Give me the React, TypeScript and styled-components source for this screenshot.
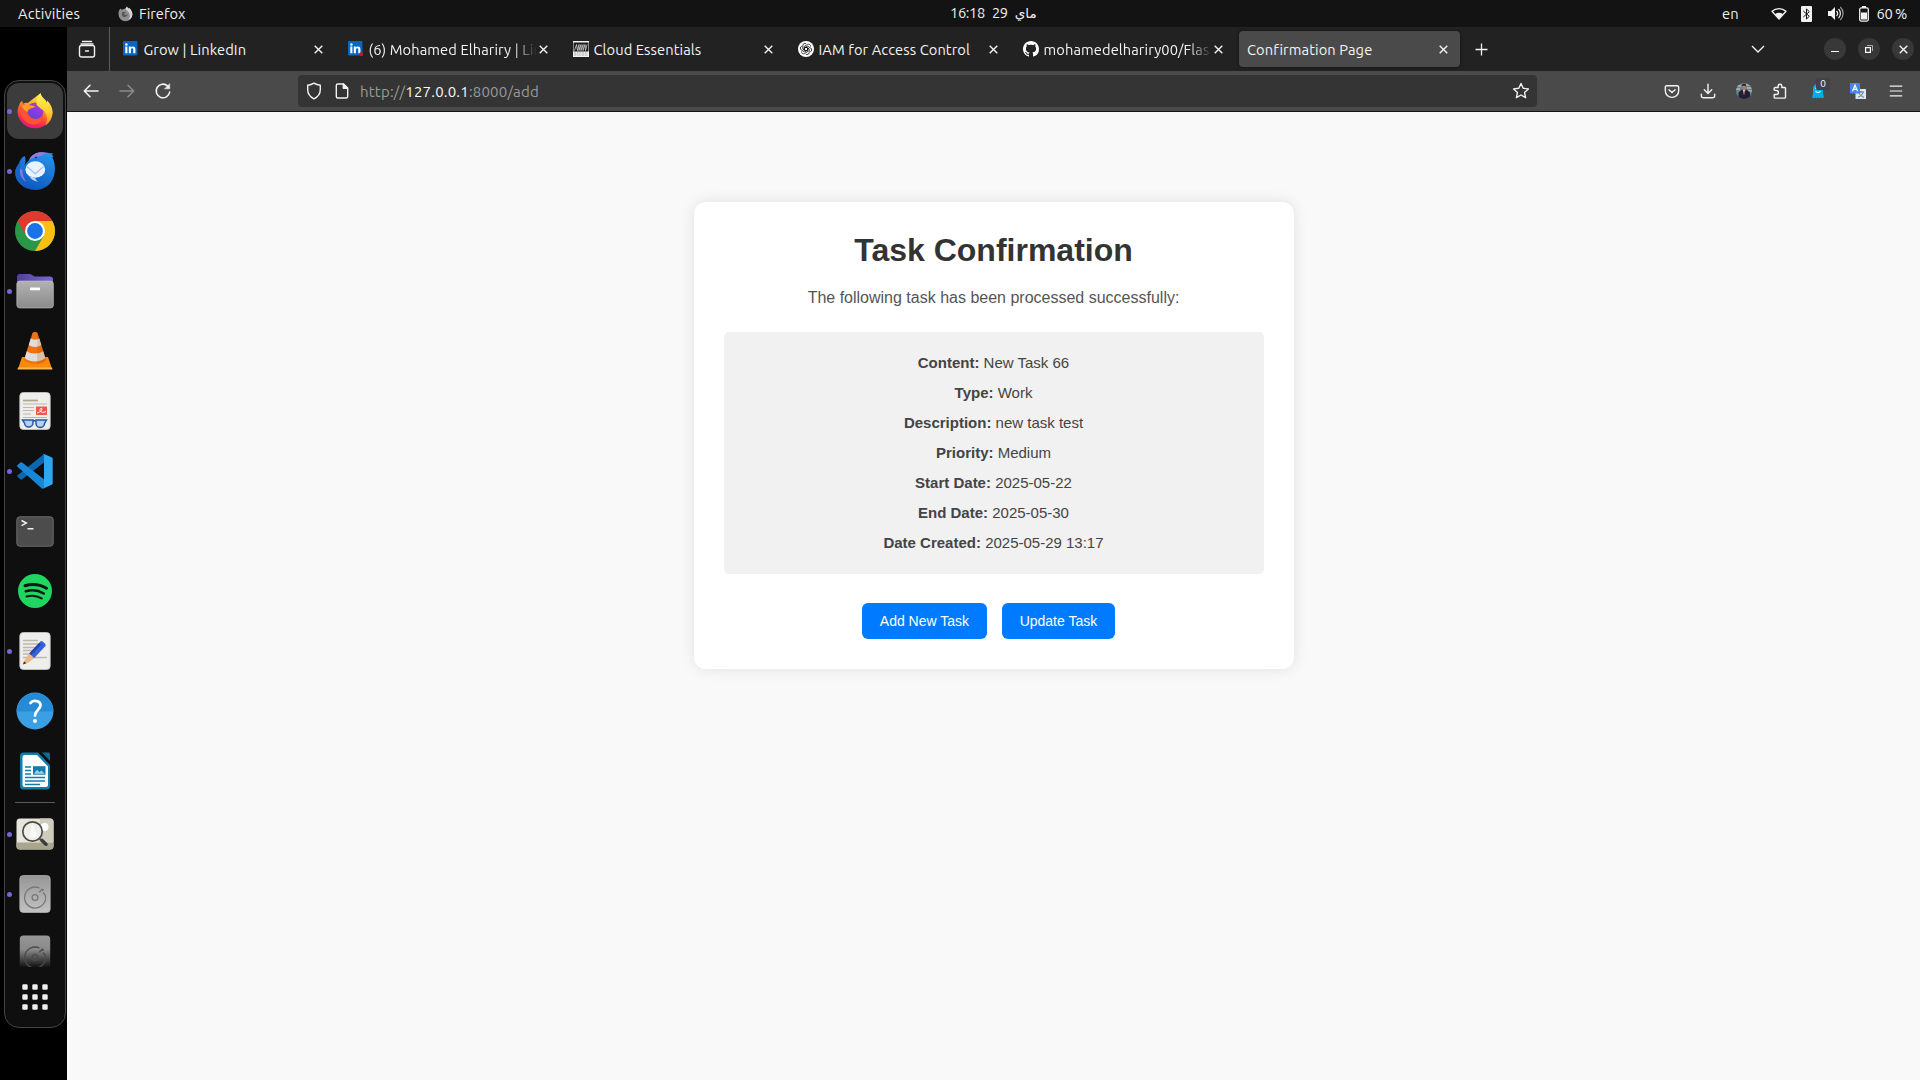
import React from "react";
import styled, { createGlobalStyle } from "styled-components";

const Global = createGlobalStyle`
  * { box-sizing: border-box; }
  html, body { margin: 0; padding: 0; background: #000; overflow: hidden; }
  svg { display: block; flex: none; }
`;

const UI_FONT = `Ubuntu, "Noto Sans", "DejaVu Sans", sans-serif`;

const Desktop = styled.div`
  width: 1920px;
  height: 1080px;
  display: grid;
  grid-template-rows: 27px 1fr;
  background: #000;
  font-family: ${UI_FONT};
  overflow: hidden;
`;

/* ---------- system bar ---------- */

const SystemBar = styled.header`
  display: grid;
  grid-template-columns: 1fr auto 1fr;
  align-items: center;
  background: #131313;
  color: #f0f0f0;
  font-size: 14.67px;
  line-height: 27px;
  white-space: nowrap;
`;

const BarGroup = styled.div<{ $end?: boolean }>`
  display: flex;
  align-items: center;
  height: 27px;
  justify-content: ${(p) => (p.$end ? "flex-end" : "flex-start")};
  padding: ${(p) => (p.$end ? "0 13px 0 0" : "0 0 0 18px")};
`;

const BarText = styled.span<{ $w?: number; $ls?: number; $ml?: number }>`
  width: ${(p) => (p.$w ? `${p.$w}px` : "auto")};
  letter-spacing: ${(p) => p.$ls ?? 0}px;
  margin-left: ${(p) => p.$ml ?? 0}px;
`;

const BarIcon = styled.span<{ $ml: number }>`
  display: flex;
  margin-left: ${(p) => p.$ml}px;
`;

const Clock = styled.div`
  display: flex;
  gap: 7px;
  width: 86px;
  letter-spacing: -0.35px;
  position: relative;
  left: 33px;
  line-height: 26px;
  height: 27px;
`;

const Arabic = styled.bdi`
  font-family: "DejaVu Sans", sans-serif;
  font-size: 13.5px;
  letter-spacing: 0;
`;

/* ---------- dock ---------- */

const Workspace = styled.div`
  display: grid;
  grid-template-columns: 67px 1fr;
  min-height: 0;
`;

const DockArea = styled.aside`
  background: #000;
  padding: 53px 1px 0 4px;
`;

const DockPanel = styled.nav`
  height: 948px;
  border: 1px solid #454545;
  border-radius: 15px;
  background: #0f0f0f;
  display: flex;
  flex-direction: column;
`;

const DockSlot = styled.div<{ $active?: boolean; $cut?: boolean }>`
  flex: none;
  margin: ${(p) => (p.$cut ? "2px 2px 0" : "2px")};
  height: ${(p) => (p.$cut ? 41 : 56)}px;
  overflow: hidden;
  display: grid;
  grid-template-columns: 5px 46px 5px;
  grid-template-rows: 56px;
  align-items: center;
  justify-items: center;
  border-radius: ${(p) => (p.$active ? 12 : 0)}px;
  background: ${(p) => (p.$active ? "#3c3c3c" : "transparent")};
`;

const Dot = styled.i<{ $on?: boolean }>`
  width: 5px;
  height: 5px;
  border-radius: 50%;
  background: ${(p) => (p.$on ? "#7764d8" : "transparent")};
`;

const DockRule = styled.hr`
  flex: none;
  width: 40px;
  height: 1px;
  border: 0;
  margin: 1px auto;
  background: #5a5a5a;
`;

/* ---------- browser ---------- */

const Browser = styled.main`
  display: grid;
  grid-template-rows: 44px 41px 1fr;
  min-width: 0;
`;

const TabStrip = styled.div`
  display: flex;
  align-items: center;
  background: #222222;
  color: #f4f4f4;
`;

const TabOverview = styled.div`
  width: 43px;
  height: 44px;
  border-right: 1px solid #5b5b5b;
  display: flex;
  align-items: center;
  padding-left: 11px;
  margin-right: 2px;
`;

const Tab = styled.div<{ $active?: boolean }>`
  width: 221px;
  height: 36px;
  margin: 0 2px;
  padding: ${(p) => (p.$active ? "0 10px 0 8px" : "0 10px 0 8.5px")};
  border-radius: 4px;
  display: flex;
  align-items: center;
  background: ${(p) => (p.$active ? "#4a4a4a" : "transparent")};
  box-shadow: ${(p) => (p.$active ? "0 0 3px rgba(0,0,0,.55)" : "none")};
`;

const Favicon = styled.span`
  width: 16px;
  margin-right: 5px;
  display: flex;
`;

const TabTitle = styled.span<{ $fade?: boolean }>`
  flex: 1;
  min-width: 0;
  overflow: hidden;
  white-space: nowrap;
  font-size: 14.67px;
  line-height: 20px;
  padding-top: 1px;
  letter-spacing: 0.1px;
  -webkit-mask-image: ${(p) =>
    p.$fade ? "linear-gradient(to right, #000 calc(100% - 24px), transparent)" : "none"};
`;

const TabClose = styled.span`
  width: 13px;
  display: flex;
  justify-content: center;
`;

const StripEnd = styled.div`
  margin-left: auto;
  display: flex;
  align-items: center;
  padding-right: 6px;
`;

const NewTab = styled.span`
  display: flex;
  margin: 1px 0 0 13px;
`;

const WindowButton = styled.span`
  width: 22px;
  height: 22px;
  margin-left: 12px;
  border-radius: 50%;
  background: #383838;
  display: flex;
  align-items: center;
  justify-content: center;
`;

const ListTabs = styled.span`
  display: flex;
  margin-right: 47px;
`;

const Toolbar = styled.div`
  display: flex;
  align-items: center;
  background: #4a4a4a;
  border-bottom: 1px solid #151515;
  padding: 0 16px 0 15px;
`;

const NavGroup = styled.div`
  display: flex;
  gap: 18px;
  width: 216px;
`;

const UrlBar = styled.div`
  width: 1239px;
  height: 32px;
  border-radius: 4px;
  background: #343434;
  display: flex;
  align-items: center;
  padding: 0 7px 0 7px;
  color: #9b9b9b;
  font-size: 15px;
`;

const Url = styled.span`
  flex: 1;
  margin-left: 9px;
  padding-top: 1px;
  letter-spacing: 0.2px;
  b { font-weight: 400; color: #fbfbfb; }
`;

const UrlIcon = styled.span<{ $ml?: number }>`
  display: flex;
  margin-left: ${(p) => p.$ml ?? 0}px;
`;

const ToolGroup = styled.div`
  margin-left: auto;
  display: flex;
  align-items: center;
  gap: 20px;
`;

const Extension = styled.span<{ $nudge?: number }>`
  position: relative;
  display: flex;
  margin: 0 ${(p) => p.$nudge ?? 0}px;
`;

const Badge = styled.span`
  position: absolute;
  left: 5px;
  top: -5px;
  width: 14px;
  height: 12px;
  border-radius: 2px;
  background: #42424e;
  color: #fff;
  font-size: 10px;
  line-height: 11px;
  text-align: center;
`;

/* ---------- web page ---------- */

const Page = styled.section`
  background: #f9f9f9;
  font-family: Arial, "Liberation Sans", sans-serif;
  padding-top: 90px;
  min-height: 0;
`;

const Card = styled.article`
  width: 600px;
  height: 467px;
  margin: 0 auto;
  padding: 30px;
  border-radius: 12px;
  background: #fff;
  box-shadow: 0 0 15px rgba(0, 0, 0, 0.1);
  text-align: center;
`;

const Title = styled.h1`
  margin: 0;
  color: #333;
  font-size: 32px;
  line-height: 37px;
`;

const Lead = styled.p`
  margin: 19px 0 0;
  color: #555;
  font-size: 16px;
  line-height: 19px;
`;

const Details = styled.div`
  margin-top: 25px;
  height: 242px;
  padding: 16px 20px;
  border-radius: 5px;
  background: #f1f1f1;
`;

const Detail = styled.p`
  margin: 0;
  color: #444;
  font-size: 15px;
  line-height: 30px;
`;

const Actions = styled.div`
  display: flex;
  justify-content: center;
  gap: 15px;
  margin-top: 29px;
  padding-right: 10px;
`;

const Action = styled.a`
  height: 36px;
  padding: 0 17.800px;
  border-radius: 6px;
  background: #007bff;
  color: #fff;
  font-size: 14px;
  line-height: 36px;
`;

/* ---------- small icons ---------- */

const Line: React.FC<{ s?: number; w?: number; c?: string; children: React.ReactNode }> = ({
  s = 18,
  w = 1.4,
  c = "#f2f2f2",
  children,
}) => (
  <svg width={s} height={s} viewBox="0 0 18 18" fill="none" stroke={c} strokeWidth={w} strokeLinecap="round" strokeLinejoin="round">
    {children}
  </svg>
);

const Cross = ({ w = 1.4 }: { w?: number }) => (
  <svg width="9" height="9" viewBox="0 0 9 9" stroke="#f2f2f2" strokeWidth={w}>
    <path d="M.7.7l7.6 7.6M8.3.7L.7 8.3" />
  </svg>
);

const LinkedIn = ({ dot }: { dot?: boolean }) => (
  <svg width="16" height="16" viewBox="0 0 16 16">
    <rect x="0" y="0" width="14.4" height="14.4" rx="1" fill="#0a66c2" />
    <circle cx="3.4" cy="3.5" r="1.25" fill="#fff" />
    <path d="M2.3 5.6h2.1v6.6H2.3zM5.8 5.6h2v.9c.4-.7 1.100-1.100 2.100-1.100 1.900 0 2.500 1.200 2.500 3v3.800h-2.100V8.700c0-.8-.2-1.500-1.100-1.500s-1.300.6-1.300 1.500v3.500H5.800z" fill="#fff" />
    {dot && <circle cx="13.2" cy="13.3" r="2" fill="#c4161c" />}
  </svg>
);

const Adidas = () => (
  <svg width="16" height="16" viewBox="0 0 16 16">
    <rect width="16" height="16" fill="#f3f3f3" />
    <rect x=".5" y="1.500" width="15" height="9" fill="#1c1c1c" />
    <path d="M1.500 9.500l2-6 1 6 1.500-6v6l2-6v6l2-6v6l2-6 .500 6 1.500-6" stroke="#cfcfcf" strokeWidth=".8" fill="none" />
    <path d="M1 12h14M1 14h14" stroke="#999" strokeWidth=".8" strokeDasharray="2 .7" />
  </svg>
);

const OpenAi = () => (
  <svg width="16" height="16" viewBox="0 0 16 16">
    <circle cx="8" cy="8" r="8" fill="#fff" />
    <g fill="none" stroke="#111" strokeWidth=".75" strokeLinejoin="round">
      {[0, 60, 120, 180, 240, 300].map((a) => (
        <path key={a} transform={`rotate(${a} 8 8)`} d="M6.300 9V5.300l3.200-1.850a2.050 2.050 0 0 1 3 2.200M6.300 7.100L8 6.100l1.700 1" />
      ))}
    </g>
  </svg>
);

const GitHub = () => (
  <svg width="16" height="16" viewBox="0 0 16 16" fill="#fff">
    <path d="M8 0C3.580 0 0 3.580 0 8c0 3.540 2.290 6.530 5.470 7.590.4.070.550-.170.550-.380 0-.190-.010-.820-.010-1.490-2.010.370-2.530-.490-2.690-.940-.090-.230-.480-.940-.820-1.130-.280-.150-.680-.520-.010-.530.630-.010 1.080.580 1.230.820.720 1.210 1.870.870 2.330.660.070-.520.280-.870.510-1.070-1.780-.2-3.640-.890-3.640-3.950 0-.870.310-1.590.820-2.150-.080-.2-.360-1.020.080-2.120 0 0 .670-.210 2.200.820.640-.180 1.320-.270 2-.270s1.360.090 2 .270c1.530-1.040 2.200-.820 2.200-.820.440 1.100.160 1.920.080 2.120.510.560.820 1.270.820 2.150 0 3.070-1.870 3.750-3.650 3.950.290.250.540.730.540 1.480 0 1.070-.010 1.930-.010 2.200 0 .210.150.460.550.380A8.010 8.010 0 0 0 16 8c0-4.420-3.580-8-8-8z" />
  </svg>
);

const Avatar = () => (
  <svg width="16" height="16" viewBox="0 0 16 16">
    <clipPath id="av"><circle cx="8" cy="8" r="8" /></clipPath>
    <g clipPath="url(#av)">
      <rect width="16" height="16" fill="#6f8289" />
      <path d="M0 3h5M10 2h6M0 6h4M11 5h5M11 8h5" stroke="#c6d2d2" strokeWidth="1.200" />
      <path d="M2.500 16V9.500L6 6.500h4.500l3.500 3V16z" fill="#1d2233" />
      <path d="M6.700 6.500L8 12l1.500-5.500z" fill="#e2e5ee" />
      <path d="M7.800 7.500h.7l.2 4-.6 1-.5-1z" fill="#91323a" />
      <ellipse cx="8.100" cy="4" rx="2" ry="2.700" fill="#ad7b64" />
      <path d="M6 3.200C6 0 10.300 0 10.200 3.200 9 2.200 7.200 2.200 6 3.200z" fill="#201917" />
    </g>
  </svg>
);

const Ghost = () => (
  <svg width="14" height="16" viewBox="0 0 14 16">
    <path d="M2 6C2 2.500 4 1 7 1s5 1.500 5 5v4.500l1 4-1.800.8-1.300-.9-1.400.9-1.500-.9-1.500.9-1.400-.9-1.300.9L1 14.500l1-4z" fill="#00aef0" />
    <path d="M4.500 8c1.200 1.900 3.800 1.900 5 0" stroke="#fff" strokeWidth="1.100" fill="none" />
    <circle cx="5" cy="5.200" r=".8" fill="#fff" />
    <circle cx="9" cy="5.200" r=".8" fill="#fff" />
  </svg>
);

const Translate = () => (
  <svg width="16" height="16" viewBox="0 0 16 16">
    <rect x="5.500" y="6" width="10.500" height="10" fill="#dfe4ec" />
    <path d="M8 9h6M11 8v1.500M13 9.500c-.6 2.200-2.500 4-5 4.700M9 10c.9 2 3 3.800 5 4.200" stroke="#587393" fill="none" strokeWidth="1" />
    <rect width="10" height="10.500" fill="#4285f4" />
    <path d="M2.500 8.300L5 2.200l2.500 6.100M3.400 6.300h3.200" stroke="#fff" strokeWidth="1.200" fill="none" />
  </svg>
);

const GreyFox = () => (
  <svg width="15" height="16" viewBox="0 0 15 16">
    <path d="M1.300 4l1.300-1.600.9 1.400L5 3.200l2.500-.6L9 .4c.4 1 1 1.400 1.400 2.300.3-.5.500-.8.500-1 2 1.500 3.500 4 3.500 6.600a6.900 6.900 0 0 1-13.900 0C.500 6.500.7 5.200 1.300 4z" fill="#8f8f8f" />
    <path d="M9 .4c.4 1 1 1.400 1.400 2.300.3-.5.500-.8.500-1 2 1.500 3.500 4 3.500 6.600 0 2.500-1.600 4.700-3.900 5.500 2-2.500 1.500-5.500.5-7.300C10 5 8 4.500 7.500 2.600z" fill="#d6d6d6" />
    <path d="M4.200 6.200c1-.6 3-.2 3.900.3-.6.900-1.500 1-2.300 1.300.9 1.500 3 1.300 4 .2-.2 2-1.600 3-3.200 3-1.900 0-3.400-2-2.400-4.800z" fill="#555" />
  </svg>
);

/* ---------- dock artwork ---------- */

const Firefox = () => (
  <svg width="38" height="38" viewBox="0 0 38 38">
    <defs>
      <linearGradient id="ff1" x1=".75" y1="0" x2=".35" y2="1">
        <stop offset="0" stopColor="#fff04a" /><stop offset=".35" stopColor="#ffb52c" />
        <stop offset=".62" stopColor="#ff5a2f" /><stop offset=".85" stopColor="#f8225f" /><stop offset="1" stopColor="#e01a7c" />
      </linearGradient>
      <linearGradient id="ff2" x1=".8" y1="0" x2=".2" y2="1">
        <stop offset="0" stopColor="#b833e1" /><stop offset="1" stopColor="#5a45d6" />
      </linearGradient>
      <linearGradient id="ff3" x1="0" y1="0" x2="0" y2="1">
        <stop offset="0" stopColor="#fff44f" /><stop offset=".6" stopColor="#ffcb33" /><stop offset="1" stopColor="#ff8a2a" />
      </linearGradient>
    </defs>
    <path d="M3.500 12.500C4 10.800 5 9.700 6.300 8.800c0 1.500.3 2.300.8 3 1.300-.9 3-1.200 4.600-.9L24.500 1.200c.6 3 2.300 4.300 4.400 6.500 1.200 1.200 1.700 2.400 2 3.200.3-.7.300-1.500.1-2.400 3.500 3.700 5.500 7.500 5.500 12A17.600 17.600 0 0 1 1.500 20.500c0-3 .7-5.700 2-8z" fill="url(#ff1)" />
    <circle cx="19" cy="19" r="8.600" fill="url(#ff2)" />
    <path d="M24.500 1.200c.6 3 2.300 4.300 4.400 6.500 1.200 1.200 1.700 2.400 2 3.200.3-.7.300-1.500.1-2.400 3.500 3.700 5.500 7.500 5.500 12 0 5.500-3 10.500-7.500 13 2.400-3.500 2.800-8.500.5-12.500-1.500-3-6-4.500-9-8.500-.5-5 1-9 4-11.300z" fill="url(#ff3)" />
    <path d="M4 15c1.500-2 3-3 5-3 .5 2 2 4 2.500 6-.5 5 4 9.500 9 9 3-.3 5.500-2 6.700-4.500.5 6-4.200 10.500-10.200 10C8.500 32 3 24 4 15z" fill="#ff5230" />
    <path d="M5.500 14c3-2 6.500-2.200 9.500-.4 1.400-.2 3 0 4.200.9-1.500 1.600-4 1.800-6 2.700-1 .8-1.500 1.800-1.700 2.800-2-.8-4.500-2.500-6-6z" fill="#ff9c24" />
  </svg>
);

const Thunderbird = () => (
  <svg width="40" height="40" viewBox="0 0 40 40">
    <defs>
      <linearGradient id="tb1" x1=".7" y1="0" x2=".3" y2="1">
        <stop offset="0" stopColor="#2592e8" /><stop offset="1" stopColor="#0f55bd" />
      </linearGradient>
    </defs>
    <path d="M14 9C17 3 23 .5 29 1.500c3.500.5 6.500.5 9.500 1l-2 1.500 2 1-1.200 1.200c2 4 3 8.500 2.500 14C39 31.500 30.500 39 20 39 9 39 0 31 .2 20.500c1-5 3-6.500 4-8.500 1-3 2-5 5.300-7 1.800 3 1 6.500-.2 9.500z" fill="url(#tb1)" />
    <path d="M14 9C17 3 23 .5 29 1.500c2 .2 4 .6 5.500.5-4 .8-7 1.200-9 3-3 .5-7 1-11.500 4z" fill="#9c7ae0" />
    <path d="M9.500 5C5.500 8 4.300 14 5 19c-3 7 0 14 7 17C4 34 0 28 .2 20.500c1-5 3-6.500 4-8.500 1-3 2-5 5.300-7z" fill="#1765c8" />
    <path d="M5.500 17c-1.500 6 1 11 6 14-2-3-4.500-7-4-12z" fill="#8d77e0" />
    <ellipse cx="20.300" cy="18.500" rx="9.900" ry="8.300" fill="#e9f3ff" />
    <path d="M12 15.500l8.300 7.200 8.300-7.200" stroke="#abc7ea" strokeWidth="1.500" fill="none" />
    <path d="M14 25c2 3.500 5 5 9 5.800-1.700-1.200-2.500-2.500-3-4z" fill="#b8d5f6" />
    <circle cx="21" cy="6.500" r="1.100" fill="#0d3e8a" />
  </svg>
);

const Chrome = () => (
  <svg width="40" height="40" viewBox="0 0 40 40">
    <circle cx="20" cy="20" r="20" fill="#2a9648" />
    <path d="M20 10h17.300A20 20 0 0 1 20 40l8.700-15z" fill="#fbbf14" />
    <path d="M2.700 10A20 20 0 0 1 37.300 10H20a10 10 0 0 0-8.700 15z" fill="#df3a2e" />
    <circle cx="20" cy="20" r="10" fill="#fff" />
    <circle cx="20" cy="20" r="7.900" fill="#1a73e8" />
  </svg>
);

const Files = () => (
  <svg width="38" height="36" viewBox="0 0 38 36">
    <defs>
      <linearGradient id="fl" x1="0" y1="0" x2="0" y2="1"><stop offset="0" stopColor="#b2b2b2" /><stop offset="1" stopColor="#8b8b8b" /></linearGradient>
      <linearGradient id="fp" x1="0" y1="0" x2="1" y2="0"><stop offset="0" stopColor="#5140a0" /><stop offset="1" stopColor="#7d67cf" /></linearGradient>
    </defs>
    <path d="M1 4a3 3 0 0 1 3-3h10c2 0 3 2.500 5 2.500h15a3 3 0 0 1 3 3V16H1z" fill="url(#fp)" />
    <rect x=".8" y="8" width="36.600" height="27" rx="3" fill="url(#fl)" stroke="#c4c4c4" strokeWidth=".6" />
    <rect x="14" y="14.500" width="10" height="2.700" rx=".6" fill="#fff" />
  </svg>
);

const Vlc = () => (
  <svg width="36" height="39" viewBox="0 1 36 39">
    <path d="M5 26h26l4 12H1z" fill="#f98b0c" />
    <path d="M1 36.500h34l.5 2H.5z" fill="#ffb84c" />
    <path d="M15.500 2c1-1.200 4-1.200 5 0L29 29c-3 5-19 5-22 0z" fill="#ef7310" />
    <path d="M13.700 7.500c2 1.500 6.500 1.500 8.600 0l2 6.600c-3 2.500-9.600 2.500-12.600 0zM9.800 20.300c4 3 12.400 3 16.400 0l2 6.700c-4 4.500-16.400 4.500-20.400 0z" fill="#dedede" />
    <path d="M20.500 2L29 29c-2 3-6 4-9 4z" fill="#a63c00" opacity=".18" />
  </svg>
);

const Sheet = ({ children }: { children: React.ReactNode }) => (
  <svg width="32" height="38" viewBox="0 0 32 38">
    <rect x=".8" y=".5" width="30.400" height="37" rx="3.500" fill="#eeeeec" stroke="#c9c9c9" strokeWidth=".8" />
    {children}
  </svg>
);

const DocViewer = () => (
  <Sheet>
    <path d="M4 8.500h15" stroke="#aca698" strokeWidth="1.800" />
    <path d="M4 12h24M4 15.500h11M4 18.500h11M4 22h8M4 25.500h24" stroke="#bdb8aa" strokeWidth="1.200" />
    <rect x="17" y="14.500" width="11" height="8.500" fill="#f4564d" />
    <path d="M18 21c2-.5 5-2 5-4 0-1.500-2.500-.5-2 1.500.7 2 3.500 2.500 6 1" stroke="#fff" strokeWidth=".9" fill="none" />
    <path d="M3.500 28h10.500v2.500a4.200 4.200 0 0 1-8.500.5zM17 28h10.500l-2 3.500a4.200 4.200 0 0 1-8.500-.500zM14 28.800h3" fill="#9fc4e9" fillOpacity=".7" stroke="#2159a5" strokeWidth="1.500" />
  </Sheet>
);

const VsCode = () => (
  <svg width="36" height="36" viewBox="0 0 36 36">
    <path d="M.5 12.300L3.300 9.800c.6-.5 1.300-.5 1.900 0L27 26.500V35L.6 13.700c-.5-.4-.5-1-.1-1.400z" fill="#1681cd" />
    <path d="M.5 23.800l2.800 2.400c.6.500 1.300.5 1.900 0L27 9.500V1L.6 22.300c-.5.500-.5 1.100-.1 1.500z" fill="#0868b2" />
    <path d="M26.500.7L35 4.600c.4.200.7.600.7 1.200v24.400c0 .6-.3 1-.7 1.200l-8.500 4c-.8.400-1.500.200-2.200-.4 1 .9 2.700.3 2.700-1.100V2.100c0-1.400-1.700-2.100-2.700-1.100.7-.6 1.400-.7 2.200-.3z" fill="#2ca7f2" />
    <path d="M5.200 9.800L27 26.500V35c-1 .9-2 .7-2.700 0L.6 13.700c-.5-.4-.5-1-.1-1.400l2.800-2.500c.6-.5 1.300-.5 1.900 0z" fill="#1787d5" />
  </svg>
);

const Terminal = () => (
  <svg width="38" height="31" viewBox="0 0 38 31">
    <rect x=".8" y=".8" width="36.400" height="29.400" rx="3" fill="#4c4c4c" stroke="#6b6b6b" />
    <path d="M5.500 4.500l4.800 2.600-4.800 2.600M11.500 12.800h6" stroke="#f0f0f0" strokeWidth="1.500" fill="none" />
  </svg>
);

const Spotify = () => (
  <svg width="34" height="34" viewBox="0 0 34 34">
    <circle cx="17" cy="17" r="17" fill="#1fd760" />
    <g fill="none" stroke="#0f1511" strokeLinecap="round">
      <path d="M7 11.700c7-2 15-1.300 21.500 2.500" strokeWidth="3" />
      <path d="M7.800 17.300c6-1.700 12.500-1 18 2.200" strokeWidth="2.500" />
      <path d="M8.500 22.500c5-1.400 10.500-.9 15.200 1.900" strokeWidth="2" />
    </g>
  </svg>
);

const TextEditor = () => (
  <Sheet>
    <path d="M4 8.500h15M4 12h17M4 15.500h16M4 18.500h12M4 22h8M4 25.500h24" stroke="#bdb8aa" strokeWidth="1.500" />
    <path d="M10.200 21.500L21.700 9.300c1.200-1.200 6 3.300 4.800 4.600L15 26.300z" fill="#3763d8" />
    <path d="M10.200 21.500L20.300 10.800l1.800 1.700L12 23.200z" fill="#2445a8" />
    <path d="M10.200 21.500l4.800 4.800-5.500 4.200-5 1.700 1.600-5z" fill="#efb985" />
    <path d="M4 32.500l1-3.300 2.300 2.100z" fill="#333" />
  </Sheet>
);

const Help = () => (
  <svg width="38" height="38" viewBox="0 0 38 38">
    <circle cx="19" cy="19" r="18.500" fill="#3b9fe3" />
    <path d="M.5 19.500a18.500 18.500 0 0 1 37 0z" fill="#268bd6" />
    <path d="M14.500 11c2-3 10-3 10 2.300 0 4.200-5.500 4.700-5.500 10.200" fill="none" stroke="#fff" strokeWidth="2.800" strokeLinecap="round" />
    <circle cx="19" cy="29" r="2" fill="#fff" />
  </svg>
);

const Writer = () => (
  <svg width="32" height="38" viewBox="0 0 32 38">
    <path d="M1 4a3.500 3.500 0 0 1 3.500-3.500H19L31 13v21a3.500 3.500 0 0 1-3.500 3.500h-23A3.500 3.500 0 0 1 1 34z" fill="#127dab" />
    <path d="M3.500 5a2 2 0 0 1 2-2H18l11 11.500V33a2 2 0 0 1-2 2H5.500a2 2 0 0 1-2-2z" fill="#fff" />
    <path d="M23 .5h6.500A1.500 1.500 0 0 1 31 2v7z" fill="#116a94" />
    <path d="M6 15h6M6 18.500h6M6 22h6M6 25.500h20M6 29h20M6 32.500h15" stroke="#127dab" strokeWidth="1.600" />
    <rect x="14" y="14.200" width="12.500" height="8.500" fill="#127dab" />
    <path d="M15 21.700l3-4 2.500 2.500 2-1.700 3 3.200z" fill="#9fd3ea" />
  </svg>
);

const ImageViewer = () => (
  <svg width="38" height="32" viewBox="0 0 38 32">
    <clipPath id="iv"><rect x=".5" y=".5" width="37" height="31" rx="3.500" /></clipPath>
    <g clipPath="url(#iv)">
      <rect width="38" height="32" fill="#e7e6dd" />
      <path d="M24 0h14v24L22 24z" fill="#cfccbe" />
      <circle cx="28.500" cy="9" r="4" fill="#fff" />
      <rect y="24.500" width="38" height="8" fill="#aaa58e" />
    </g>
    <circle cx="16.500" cy="13.500" r="9.700" fill="#efefe9" stroke="#4b4b4b" strokeWidth="1.700" />
    <path d="M16 5l6 14h-8z" fill="#fff" opacity=".6" />
    <path d="M23.500 20.500l2.500 2.300" stroke="#555" strokeWidth="1.700" />
    <path d="M26 22.500l4 3.700" stroke="#3c3c3c" strokeWidth="3.600" strokeLinecap="round" />
  </svg>
);

const Disk = ({ id, fade }: { id: string; fade?: boolean }) => (
  <svg width="32" height="38" viewBox="0 0 32 38">
    <linearGradient id={id} x1="0" y1="0" x2="0" y2="1">
      <stop offset="0" stopColor="#969696" />
      <stop offset={fade ? ".38" : "1"} stopColor={fade ? "#898989" : "#c2c2c2"} />
      {fade && <stop offset=".84" stopColor="#151515" />}
    </linearGradient>
    <rect x=".8" y=".5" width="30.400" height="37" rx="3.500" fill={`url(#${id})`} stroke={fade ? "none" : "#b9b9b9"} strokeWidth=".7" />
    <g fill="none" stroke={fade ? "#4c4c4c" : "#777"} strokeWidth="1.300">
      <path d="M20.500 13A10.500 10.500 0 1 0 26.300 20" />
      <path d="M20.200 17.300l3.300-3.600M22 15.500l3-.8M24 17.500l2.300 2.700" />
      <circle cx="16" cy="22.500" r="2.900" />
    </g>
  </svg>
);

const Grid = () => (
  <svg width="26" height="26" viewBox="0 0 26 26" fill="#f1f1f1">
    {[0, 10, 20].flatMap((y) => [0, 10, 20].map((x) => <rect key={`${x}-${y}`} x={x + 0.3} y={y + 0.3} width="5.400" height="5.400" rx="1.300" />))}
  </svg>
);

const dock: { art: React.ReactNode; on?: boolean; active?: boolean }[] = [
  { art: <Firefox />, on: true, active: true },
  { art: <Thunderbird />, on: true },
  { art: <Chrome /> },
  { art: <Files />, on: true },
  { art: <Vlc /> },
  { art: <DocViewer /> },
  { art: <VsCode />, on: true },
  { art: <Terminal /> },
  { art: <Spotify /> },
  { art: <TextEditor />, on: true },
  { art: <Help /> },
  { art: <Writer /> },
];

const tabs: { title: string; icon?: React.ReactNode; fade?: boolean; active?: boolean }[] = [
  { title: "Grow | LinkedIn", icon: <LinkedIn /> },
  { title: "(6) Mohamed Elhariry | Lin", icon: <LinkedIn dot />, fade: true },
  { title: "Cloud Essentials", icon: <Adidas /> },
  { title: "IAM for Access Control", icon: <OpenAi /> },
  { title: "mohamedelhariry00/Flas", icon: <GitHub />, fade: true },
  { title: "Confirmation Page", active: true },
];

const details: [string, string][] = [
  ["Content:", "New Task 66"],
  ["Type:", "Work"],
  ["Description:", "new task test"],
  ["Priority:", "Medium"],
  ["Start Date:", "2025-05-22"],
  ["End Date:", "2025-05-30"],
  ["Date Created:", "2025-05-29 13:17"],
];

const App: React.FC = () => (
  <Desktop>
    <Global />
    <SystemBar>
      <BarGroup>
        <BarText $w={63} $ls={0.2}>Activities</BarText>
        <BarIcon $ml={37}><GreyFox /></BarIcon>
        <BarText $ml={6}>Firefox</BarText>
      </BarGroup>
      <Clock>
        <span>16:18</span>
        <span>29</span>
        <Arabic>ماي</Arabic>
      </Clock>
      <BarGroup $end>
        <BarText>en</BarText>
        <BarIcon $ml={32}>
          <svg width="16" height="14" viewBox="0 0 16 14">
            <path d="M1 4.300C5 .7 11 .7 15 4.300L8 12z" fill="none" stroke="#f2f2f2" strokeWidth="1.300" strokeLinejoin="round" />
            <path d="M4 7.200c2.500-1.800 5.500-1.800 8 0L8 12z" fill="#f2f2f2" />
          </svg>
        </BarIcon>
        <BarIcon $ml={14}>
          <svg width="11" height="16" viewBox="0 0 11 16">
            <rect width="11" height="16" rx="1" fill="#f2f2f2" />
            <path d="M2.300 5l6 5.300L5.500 13V3l2.800 2.700-6 5.300" fill="none" stroke="#131313" strokeWidth="1" />
          </svg>
        </BarIcon>
        <BarIcon $ml={16}>
          <svg width="16" height="15" viewBox="0 0 16 15" fill="none" stroke="#f2f2f2" strokeWidth="1.200">
            <path d="M0 5h3l4-4v13l-4-4H0z" fill="#f2f2f2" stroke="none" />
            <path d="M8.500 5c1.400 1.500 1.400 3.500 0 5M10.500 3c2.500 2.500 2.500 6.500 0 9" />
            <path d="M12.300 1c3.700 3.500 3.700 9.500 0 13" stroke="#999" />
          </svg>
        </BarIcon>
        <BarIcon $ml={15}>
          <svg width="10" height="16" viewBox="0 0 10 16">
            <rect x=".7" y="1.900" width="8.600" height="13.200" rx="1.500" fill="none" stroke="#f2f2f2" strokeWidth="1.300" />
            <rect x="3" y="0" width="4" height="2" fill="#f2f2f2" />
            <rect x="2" y="6.500" width="6" height="7" fill="#f2f2f2" />
          </svg>
        </BarIcon>
        <BarText $ml={8} $ls={-0.45}>60 %</BarText>
      </BarGroup>
    </SystemBar>

    <Workspace>
      <DockArea>
        <DockPanel>
          {dock.map((d, i) => (
            <DockSlot key={i} $active={d.active}>
              <Dot $on={d.on} />
              {d.art}
            </DockSlot>
          ))}
          <DockRule />
          <DockSlot><Dot $on /><ImageViewer /></DockSlot>
          <DockSlot><Dot $on /><Disk id="dk1" /></DockSlot>
          <DockSlot $cut><Dot /><Disk id="dk2" fade /></DockSlot>
          <DockSlot><Dot /><Grid /></DockSlot>
        </DockPanel>
      </DockArea>

      <Browser>
        <TabStrip>
          <TabOverview>
            <Line><path d="M4.500 1.500h9M3 4h12" /><rect x="1.500" y="5.500" width="15" height="11.500" rx="2" /><path d="M7.500 11h3" /></Line>
          </TabOverview>
          {tabs.map((t) => (
            <Tab key={t.title} $active={t.active}>
              {t.icon && <Favicon>{t.icon}</Favicon>}
              <TabTitle $fade={t.fade}>{t.title}</TabTitle>
              <TabClose><Cross /></TabClose>
            </Tab>
          ))}
          <NewTab>
            <svg width="13" height="13" viewBox="0 0 13 13" stroke="#f2f2f2" strokeWidth="1.300"><path d="M6.500.5v12M.5 6.500h12" /></svg>
          </NewTab>
          <StripEnd>
            <ListTabs>
              <svg width="14" height="8" viewBox="0 0 14 8" fill="none" stroke="#f2f2f2" strokeWidth="1.400"><path d="M1 1l6 6 6-6" /></svg>
            </ListTabs>
            <WindowButton>
              <svg width="8" height="8" viewBox="0 0 8 8"><path d="M0 6.500h8" stroke="#fff" strokeWidth="1" /></svg>
            </WindowButton>
            <WindowButton>
              <svg width="8" height="8" viewBox="0 0 8 8" fill="none"><rect x=".6" y="2.600" width="4.800" height="4.800" stroke="#fff" strokeWidth="1.200" /><path d="M2 .5h5.500V6" stroke="#aaa" /></svg>
            </WindowButton>
            <WindowButton><Cross /></WindowButton>
          </StripEnd>
        </TabStrip>

        <Toolbar>
          <NavGroup>
            <Line w={1.600}><path d="M16 9H2.500M8 3.300L2.300 9 8 14.700" /></Line>
            <Line w={1.500} c="#8c8c8c"><path d="M2 9h13.500M10 3.300L15.700 9 10 14.700" /></Line>
            <Line w={1.600}><path d="M15.700 10A6.800 6.800 0 1 1 13.500 3.900" /><path d="M15.700 2v4.800h-4.800z" fill="#f2f2f2" strokeWidth=".6" /></Line>
          </NavGroup>
          <UrlBar>
            <UrlIcon><Line><path d="M9 1.200c2 1.300 4 1.800 6.300 2v4.300c0 4-2.500 7.500-6.300 9.300-3.800-1.800-6.300-5.300-6.300-9.300V3.200C5 3 7 2.500 9 1.200z" /></Line></UrlIcon>
            <UrlIcon $ml={10}><Line><path d="M10.500 2H4.800a1.500 1.500 0 0 0-1.500 1.500v11A1.500 1.500 0 0 0 4.800 16h8.400a1.500 1.500 0 0 0 1.500-1.500V6z" /><path d="M10.300 2v4.200h4.200z" fill="#f2f2f2" /></Line></UrlIcon>
            <Url>http://<b>127.0.0.1</b>:8000/add</Url>
            <Line><path d="M9 1.500l2.200 4.800 5.200.6-3.900 3.500 1.100 5.200L9 13l-4.600 2.600 1.100-5.200L1.600 6.900l5.200-.6z" /></Line>
          </UrlBar>
          <ToolGroup>
            <Line s={16} w={1.600}><path d="M3.200 3h11.600c1 0 1.700.7 1.700 1.700v4a7.500 7.500 0 0 1-15 0v-4C1.500 3.700 2.200 3 3.200 3z" /><path d="M5.500 7.500L9 10.800l3.500-3.300" /></Line>
            <Line s={16} w={1.600}><path d="M9 1.500v10M4.800 7.600L9 11.800l4.200-4.200M1.500 12.500v2a2 2 0 0 0 2 2h11a2 2 0 0 0 2-2v-2" /></Line>
            <Avatar />
            <Line s={16} w={1.600}><path d="M2.500 8V6a1 1 0 0 1 1-1H7V3.500a2 2 0 0 1 4 0V5h3.200a1 1 0 0 1 1 1v10a1 1 0 0 1-1 1H3.500a1 1 0 0 1-1-1v-3H5a2.200 2.200 0 0 0 0-4.500z" /></Line>
            <Extension $nudge={3}><Ghost /><Badge>0</Badge></Extension>
            <Extension $nudge={2}><Translate /></Extension>
            <Line s={16} w={1.300}><path d="M2 3.500h14M2 9h14M2 14.500h14" strokeLinecap="butt" /></Line>
          </ToolGroup>
        </Toolbar>

        <Page>
          <Card>
            <Title>Task Confirmation</Title>
            <Lead>The following task has been processed successfully:</Lead>
            <Details>
              {details.map(([k, v]) => (
                <Detail key={k}><strong>{k}</strong> {v}</Detail>
              ))}
            </Details>
            <Actions>
              <Action>Add New Task</Action>
              <Action>Update Task</Action>
            </Actions>
          </Card>
        </Page>
      </Browser>
    </Workspace>
  </Desktop>
);

export default App;
